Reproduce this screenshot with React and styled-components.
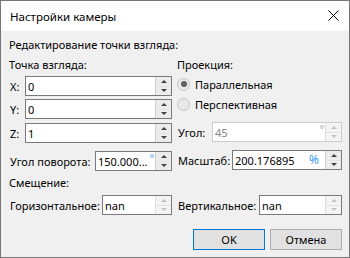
import React from "react";
import styled, { createGlobalStyle } from "styled-components";

const GlobalStyle = createGlobalStyle`
  html, body {
    margin: 0;
    padding: 0;
    background: #f0f0f0;
  }
  * {
    box-sizing: border-box;
  }
`;

export default function App() {
  return (
    <>
      <GlobalStyle />
      <Window>
        {/* title */}
        <TitleBar>
          <Title>Настройки камеры</Title>
          <Close>
            <svg width="11" height="11" viewBox="0 0 11 11">
              <path d="M0.5 0.5 L10.5 10.5 M10.5 0.5 L0.5 10.5" stroke="#000" strokeWidth="1" />
            </svg>
          </Close>
        </TitleBar>

        <Body>
          <Heading $mt={6}>Редактирование точки взгляда:</Heading>

          <Columns $mt={4}>
            <Column $w={163}>
              <Heading>Точка взгляда:</Heading>
              <Row $mt={3}>
                <Label $w={16}>X:</Label>
                <SpinBox value="0" />
              </Row>
              <Row $mt={3}>
                <Label $w={16}>Y:</Label>
                <SpinBox value="0" />
              </Row>
              <Row $mt={4}>
                <Label $w={16}>Z:</Label>
                <SpinBox value="1" />
              </Row>
              <Row $mt={8}>
                <Label $w={86}>Угол поворота:</Label>
                <SpinBox value="150.000..." suffix="°" />
              </Row>
            </Column>

            <Column $w={165}>
              <Heading>Проекция:</Heading>
              <Radio $mt={3} checked>Параллельная</Radio>
              <Radio $mt={4}>Перспективная</Radio>
              <Row $mt={10}>
                <Label $w={35}>Угол:</Label>
                <SpinBox value="45" suffix="°" disabled />
              </Row>
              <Row $mt={8}>
                <Label $w={55}>Масштаб:</Label>
                <SpinBox value="200.176895" suffix="%" suffixGap={6} />
              </Row>
            </Column>
          </Columns>

          <Heading $mt={4}>Смещение:</Heading>

          <Columns $mt={4}>
            <Column $w={163}>
              <Row>
                <Label $w={93}>Горизонтальное:</Label>
                <SpinBox value="nan" arrowsOff />
              </Row>
            </Column>
            <Column $w={165}>
              <Row>
                <Label $w={82}>Вертикальное:</Label>
                <SpinBox value="nan" arrowsOff />
              </Row>
            </Column>
          </Columns>

          <Buttons>
            <Button $default>OK</Button>
            <Button>Отмена</Button>
          </Buttons>
        </Body>
      </Window>
    </>
  );
}

function SpinBox({ value, suffix, suffixGap = 1, disabled, arrowsOff }) {
  const dim = disabled || arrowsOff;
  return (
    <Field $disabled={disabled}>
      <Value $disabled={disabled}>{value}</Value>
      {suffix && (
        <Suffix $disabled={disabled} $gap={suffixGap}>
          {suffix}
        </Suffix>
      )}
      <Spin $disabled={dim}>
        <SpinButton $disabled={dim}>
          <Arrow $up $disabled={dim} />
        </SpinButton>
        <SpinButton $disabled={dim}>
          <Arrow $disabled={dim} />
        </SpinButton>
      </Spin>
    </Field>
  );
}

function Radio({ checked, children, $mt }) {
  return (
    <RadioRow $mt={$mt}>
      <RadioCircle $checked={checked} />
      <span>{children}</span>
    </RadioRow>
  );
}

// - window
const Window = styled.div`
  width: 350px;
  height: 258px;
  border: 1px solid #767676;
  background: #f0f0f0;
  display: flex;
  flex-direction: column;
  font-family: "Noto Sans", "Open Sans", sans-serif;
  font-size: 11px;
  color: #000;
`;

const TitleBar = styled.div`
  height: 30px;
  background: #fff;
  display: flex;
  align-items: center;
  justify-content: space-between;
  padding: 0 10px 0 9px;
`;

const Title = styled.div`
  font-size: 11.5px;
  padding-top: 1px;
`;

const Close = styled.div`
  width: 11px;
  height: 11px;
  display: flex;
  margin-top: -2px;
`;

const Body = styled.div`
  flex: 1;
  display: flex;
  flex-direction: column;
  padding: 0 7px 0 8px;
`;

const Heading = styled.div`
  height: 16px;
  line-height: 16px;
  margin-top: ${(p) => p.$mt || 0}px;
  white-space: nowrap;
`;

const Columns = styled.div`
  display: flex;
  gap: 5px;
  margin-top: ${(p) => p.$mt || 0}px;
`;

const Column = styled.div`
  width: ${(p) => p.$w}px;
  display: flex;
  flex-direction: column;
`;

// - form rows
const Row = styled.div`
  display: flex;
  align-items: center;
  height: 20px;
  margin-top: ${(p) => p.$mt || 0}px;
`;

const Label = styled.div`
  width: ${(p) => p.$w}px;
  flex-shrink: 0;
  white-space: nowrap;
  padding-left: 1px;
`;

const Field = styled.div`
  flex: 1;
  height: 20px;
  display: flex;
  align-items: center;
  background: #fff;
  border: 1px solid ${(p) => (p.$disabled ? "#cccccc" : "#7a7a7a")};
`;

const Value = styled.div`
  flex: 1;
  padding-left: 2px;
  white-space: nowrap;
  overflow: hidden;
  color: ${(p) => (p.$disabled ? "#838383" : "#000")};
`;

const Suffix = styled.div`
  color: ${(p) => (p.$disabled ? "#a0a0a0" : "#3c9af0")};
  font-size: ${(p) => (p.$gap > 1 ? 12 : 10)}px;
  margin-right: ${(p) => p.$gap}px;
  align-self: flex-start;
  line-height: ${(p) => (p.$gap > 1 ? 18 : 12)}px;
`;

const Spin = styled.div`
  width: 16px;
  height: 100%;
  display: flex;
  flex-direction: column;
  border-left: 1px solid ${(p) => (p.$disabled ? "#dedede" : "#cfcfcf")};
`;

const SpinButton = styled.div`
  flex: 1;
  display: flex;
  align-items: center;
  justify-content: center;
  background: ${(p) => (p.$disabled ? "#f4f4f4" : "#ececec")};
  & + & {
    border-top: 1px solid ${(p) => (p.$disabled ? "#e2e2e2" : "#cfcfcf")};
  }
`;

const Arrow = styled.div`
  width: 0;
  height: 0;
  border-left: 3px solid transparent;
  border-right: 3px solid transparent;
  ${(p) =>
    p.$up
      ? `border-bottom: 3px solid ${p.$disabled ? "#c2c2c2" : "#404040"};`
      : `border-top: 3px solid ${p.$disabled ? "#c2c2c2" : "#404040"};`}
`;

// - radios
const RadioRow = styled.div`
  display: flex;
  align-items: center;
  height: 16px;
  margin-top: ${(p) => p.$mt || 0}px;
  gap: 5px;
`;

const RadioCircle = styled.div`
  width: 13px;
  height: 13px;
  border-radius: 50%;
  border: 1px solid #c6c6c6;
  background: #e8e8e8;
  display: flex;
  align-items: center;
  justify-content: center;
  &::after {
    content: "";
    display: ${(p) => (p.$checked ? "block" : "none")};
    width: 6px;
    height: 6px;
    border-radius: 50%;
    background: #606060;
  }
`;

// - buttons
const Buttons = styled.div`
  display: flex;
  justify-content: flex-end;
  gap: 5px;
  margin-top: 14px;
`;

const Button = styled.div`
  width: 72px;
  height: 21px;
  display: flex;
  align-items: center;
  justify-content: center;
  background: #e1e1e1;
  border: 1px solid ${(p) => (p.$default ? "#0078d7" : "#adadad")};
`;
